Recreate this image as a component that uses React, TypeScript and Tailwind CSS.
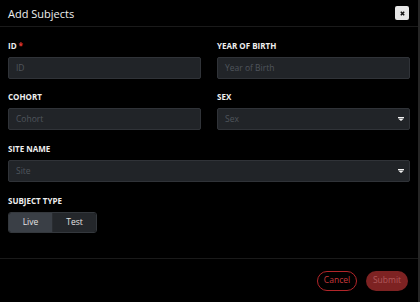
import React from "react";

const font = { fontFamily: '"Open Sans", "Noto Sans", sans-serif' };

function Caret() {
  return (
    <svg width="6" height="4" viewBox="0 0 6 4" className="shrink-0">
      <rect x="0" y="0" width="6" height="1" fill="#f2f2f2" />
      <path d="M0 1.4 H6 L3 4 Z" fill="#f2f2f2" />
    </svg>
  );
}

function Label({ text, required }: { text: string; required?: boolean }) {
  return (
    <div className="flex h-3 items-center gap-[2px] text-[8px] font-bold uppercase leading-none text-[#efefef]">
      {text}
      {required && <span className="text-[8px] text-[#e53935]">*</span>}
    </div>
  );
}

function Field({ label, placeholder, required, select }: {
  label: string; placeholder: string; required?: boolean; select?: boolean;
}) {
  return (
    <div className="flex flex-col gap-[5px]">
      <Label text={label} required={required} />
      <div className="flex h-[22px] items-center justify-between rounded-[2px] border border-[#303338] bg-[#212428] pl-[7px] pr-[5px]">
        <span className="text-[8.5px] text-[#50555c]">{placeholder}</span>
        {select && <Caret />}
      </div>
    </div>
  );
}

export default function App() {
  return (
    <div style={font} className="flex h-[302px] w-[420px] flex-col border-r-2 border-[#262626] bg-black">
      <div className="flex h-[27px] shrink-0 items-center justify-between border-b border-[#1a1a1a] pl-2 pr-[9px]">
        <h1 className="pt-[2px] text-[11px] text-[#efefef]">Add Subjects</h1>
        <button className="flex size-[14px] items-center justify-center rounded-[2px] bg-[#e6e6e6]">
          <svg width="5" height="5" viewBox="0 0 5 5">
            <path d="M0.8 0.8 L4.2 4.2 M4.2 0.8 L0.8 4.2" stroke="#111" strokeWidth="1.5" />
          </svg>
        </button>
      </div>

      <div className="flex flex-col px-2 pt-[13px]">
        <div className="grid grid-cols-2 gap-x-4">
          <Field label="ID" placeholder="ID" required />
          <Field label="Year of Birth" placeholder="Year of Birth" />
        </div>
        <div className="mt-3 grid grid-cols-2 gap-x-4">
          <Field label="Cohort" placeholder="Cohort" />
          <Field label="Sex" placeholder="Sex" select />
        </div>
        <div className="mt-[13px]">
          <Field label="Site Name" placeholder="Site" select />
        </div>
        <div className="mt-[13px] flex flex-col gap-[5px]">
          <Label text="Subject Type" />
          <div className="flex h-[21px] w-[89px] overflow-hidden rounded-[3px] border border-[#34383d] text-[8.5px] text-[#e4e4e4]">
            <button className="flex w-[44px] items-center justify-center border-r border-[#2a2d31] bg-[#3a3f46]">Live</button>
            <button className="flex flex-1 items-center justify-center bg-[#24272b]">Test</button>
          </div>
        </div>
      </div>

      <div className="mt-auto flex h-[44px] items-center justify-end gap-[9px] border-t border-[#1a1a1a] pr-[10px]">
        <button className="flex h-5 w-10 items-center justify-center rounded-full border border-[#b3262a] text-[8.5px] text-[#c8393c]">
          Cancel
        </button>
        <button className="flex h-5 w-[42px] items-center justify-center rounded-full bg-[#7d2222] text-[8.5px] text-[#b0585a]">
          Submit
        </button>
      </div>
    </div>
  );
}
